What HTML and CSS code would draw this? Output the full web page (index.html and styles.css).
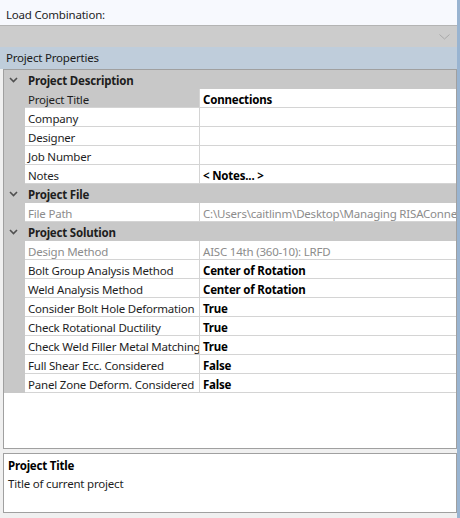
FILE: index.html
```html
<!DOCTYPE html>
<html>
<head>
<meta charset="utf-8">
<link rel="stylesheet" href="styles.css">
</head>
<body>
<div class="window">
  <div class="main">
    <div class="lc-label">Load Combination:</div>
    <div class="combo">
      <svg class="combo-arrow" width="11" height="6" viewBox="0 0 11 6"><path d="M0.5 0.5 L5.5 5 L10.5 0.5" fill="none" stroke="#a8a8a8" stroke-width="1"/></svg>
    </div>
    <div class="pp-header">Project Properties</div>
    <div class="grid">
      <div class="cat"><span class="chev"><svg width="9" height="6" viewBox="0 0 9 6"><path d="M1 1 L4.5 4.5 L8 1" fill="none" stroke="#505050" stroke-width="1.6"/></svg></span><span class="cat-name">Project Description</span></div>
      <div class="row sel"><span class="gut"></span><span class="lab">Project Title</span><span class="val b">Connections</span></div>
      <div class="row"><span class="gut"></span><span class="lab">Company</span><span class="val"></span></div>
      <div class="row"><span class="gut"></span><span class="lab">Designer</span><span class="val"></span></div>
      <div class="row"><span class="gut"></span><span class="lab">Job Number</span><span class="val"></span></div>
      <div class="row"><span class="gut"></span><span class="lab">Notes</span><span class="val b">&lt; Notes... &gt;</span></div>
      <div class="cat"><span class="chev"><svg width="9" height="6" viewBox="0 0 9 6"><path d="M1 1 L4.5 4.5 L8 1" fill="none" stroke="#505050" stroke-width="1.6"/></svg></span><span class="cat-name">Project File</span></div>
      <div class="row dis"><span class="gut"></span><span class="lab">File Path</span><span class="val">C:\Users\caitlinm\Desktop\Managing RISAConnection</span></div>
      <div class="cat"><span class="chev"><svg width="9" height="6" viewBox="0 0 9 6"><path d="M1 1 L4.5 4.5 L8 1" fill="none" stroke="#505050" stroke-width="1.6"/></svg></span><span class="cat-name">Project Solution</span></div>
      <div class="row dis"><span class="gut"></span><span class="lab">Design Method</span><span class="val">AISC 14th (360-10): LRFD</span></div>
      <div class="row"><span class="gut"></span><span class="lab">Bolt Group Analysis Method</span><span class="val b">Center of Rotation</span></div>
      <div class="row"><span class="gut"></span><span class="lab">Weld Analysis Method</span><span class="val b">Center of Rotation</span></div>
      <div class="row"><span class="gut"></span><span class="lab">Consider Bolt Hole Deformation</span><span class="val b">True</span></div>
      <div class="row"><span class="gut"></span><span class="lab">Check Rotational Ductility</span><span class="val b">True</span></div>
      <div class="row"><span class="gut"></span><span class="lab">Check Weld Filler Metal Matching</span><span class="val b">True</span></div>
      <div class="row"><span class="gut"></span><span class="lab">Full Shear Ecc. Considered</span><span class="val b">False</span></div>
      <div class="row"><span class="gut"></span><span class="lab">Panel Zone Deform. Considered</span><span class="val b">False</span></div>
    </div>
    <div class="desc">
      <div class="desc-title">Project Title</div>
      <div class="desc-text">Title of current project</div>
    </div>
  </div>
  <div class="edge"></div>
</div>
</body>
</html>
```
FILE: styles.css
```css
html, body {
  margin: 0;
  padding: 0;
}
body {
  width: 460px;
  height: 518px;
  overflow: hidden;
  font-family: "Noto Sans", "Open Sans", sans-serif;
  font-size: 11.5px;
  letter-spacing: -0.2px;
  color: #1e1e1e;
  background: #f0efed;
}
.window {
  display: flex;
  height: 518px;
}
.main {
  flex: 1;
  min-width: 0;
  display: flex;
  flex-direction: column;
  background: #f0f0f0;
}
.edge {
  width: 3px;
  flex: none;
  background: #99b4d1;
}
.lc-label {
  height: 25px;
  line-height: 29px;
  padding-left: 6px;
  background: #f7f9fe;
  box-sizing: border-box;
}
.combo {
  height: 22px;
  box-sizing: border-box;
  background: #cccccc;
  border-top: 1px solid #b4b4b4;
  display: flex;
  align-items: center;
  justify-content: flex-end;
  padding-right: 7px;
}
.combo-arrow {
  margin-top: 2px;
}
.pp-header {
  height: 22px;
  line-height: 22px;
  padding-left: 6px;
  background: #bfcddb;
  color: #1a1a1a;
  box-sizing: border-box;
}
.grid {
  margin-left: 3px;
  height: 381px;
  box-sizing: border-box;
  border: 1px solid #a0a0a0;
  background: #ffffff;
  overflow: hidden;
}
.cat {
  height: 19px;
  background: #c8c8c8;
  display: flex;
  align-items: center;
}
.chev {
  width: 21px;
  display: flex;
  justify-content: center;
  padding-right: 3px;
  box-sizing: border-box;
  margin-top: 1px;
}
.cat-name {
  font-weight: bold;
  padding-left: 3px;
  padding-top: 2px;
}
.row {
  height: 19px;
  display: flex;
}
.gut {
  width: 21px;
  flex: none;
  background: #c8c8c8;
}
.lab {
  width: 175px;
  flex: none;
  box-sizing: border-box;
  padding-left: 3px;
  line-height: 21px;
  border-bottom: 1px solid #d4d4d4;
  border-right: 1px solid #d4d4d4;
  white-space: nowrap;
  overflow: hidden;
}
.val {
  flex: 1;
  min-width: 0;
  padding-left: 3px;
  line-height: 21px;
  border-bottom: 1px solid #d4d4d4;
  white-space: nowrap;
  overflow: hidden;
}
.b {
  font-weight: bold;
  color: #000000;
}
.sel .lab {
  background: #c8c8c8;
}
.dis .lab, .dis .val {
  color: #8c8c8c;
}
.desc {
  margin: 4px 0 5px 3px;
  height: 60px;
  box-sizing: border-box;
  border: 1px solid #a0a0a0;
  background: #ffffff;
  padding: 4px 4px;
}
.desc-title {
  font-weight: bold;
  line-height: 16px;
  color: #000;
}
.desc-text {
  line-height: 19px;
}
```
